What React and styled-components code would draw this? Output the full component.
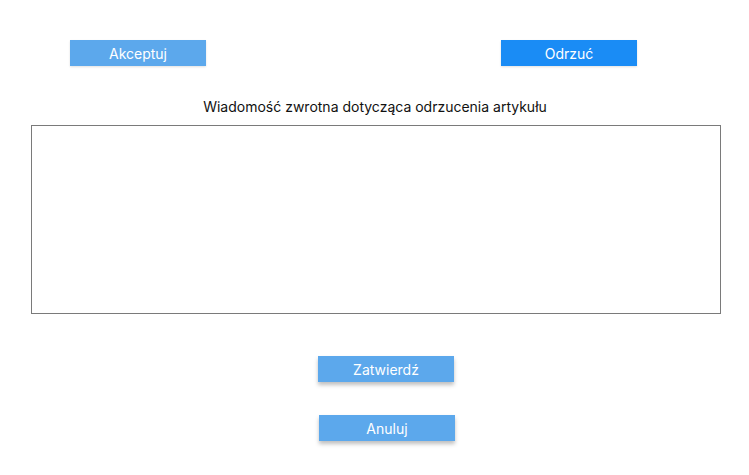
import styled, { createGlobalStyle } from "styled-components"

const Global = createGlobalStyle`
    body {
        margin: 0;
        background: #fff;
        font-family: Inter, "Noto Sans", sans-serif;
    }
`;

const Page = styled.div`
    width: 749px;
    height: 475px;
    display: flex;
    flex-direction: column;
`;

const TopRow = styled.div`
    display: flex;
    justify-content: space-between;
    padding: 40px 112px 0 70px;
`;

const Button = styled.button`
    width: 136px;
    height: 26px;
    border: none;
    padding: 0;
    background: ${(p) => (p.$strong ? "#1a8cf5" : "#5ca8ec")};
    color: #fff;
    font-family: Inter, sans-serif;
    font-size: 14px;
    box-shadow: ${(p) => (p.$raised ? "0 3px 4px rgba(0,0,0,0.25)" : "0 1px 2px rgba(0,0,0,0.12)")};
    cursor: pointer;
`;

const Label = styled.div`
    margin-top: 32px;
    text-align: center;
    font-size: 14px;
    line-height: 17px;
    color: #111;
    padding-left: 1px;
`;

const Feedback = styled.textarea`
    display: block;
    margin: 10px 0 0 31px;
    width: 690px;
    height: 189px;
    box-sizing: border-box;
    border: 1px solid #7a7a7a;
    resize: none;
    outline: none;
    font-family: Inter, sans-serif;
    font-size: 14px;
`;

const Actions = styled.div`
    display: flex;
    flex-direction: column;
    gap: 33px;
    margin-top: 42px;
    padding-left: 318px;
`;

const Shifted = styled.div`
    padding-left: ${(p) => p.$shift || 0}px;
`;

export default function App() {
    return (
        <Page>
            <Global />
            <TopRow>
                <Button>Akceptuj</Button>
                <Button $strong>Odrzuć</Button>
            </TopRow>
            <Label>Wiadomość zwrotna dotycząca odrzucenia artykułu</Label>
            <Feedback />
            <Actions>
                <Shifted>
                    <Button $raised>Zatwierdź</Button>
                </Shifted>
                <Shifted $shift={1}>
                    <Button $raised>Anuluj</Button>
                </Shifted>
            </Actions>
        </Page>
    )
}
